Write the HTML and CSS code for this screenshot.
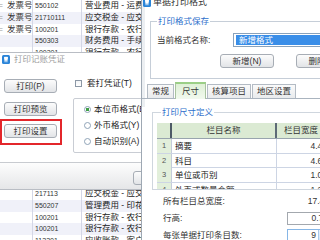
FILE: index.html
```html
<!DOCTYPE html>
<html>
<head>
<meta charset="utf-8">
<link rel="stylesheet" href="styles.css">
</head>
<body>
<div class="screen">
  <div class="sheet">
    <div class="row"><span class="c0"><i>=</i>发票号</span><span class="c1">550102</span><span class="c2">营业费用 - 运费</span></div>
    <div class="row"><span class="c0"><i>=</i>发票号</span><span class="c1">21710111</span><span class="c2">应交税金 - 应交增值税</span></div>
    <div class="row"><span class="c0"><i>=</i>发票号</span><span class="c1">100201</span><span class="c2">银行存款 - 农行</span></div>
    <div class="row"><span class="c0"></span><span class="c1">550303</span><span class="c2">财务费用 - 手续费</span></div>
    <div class="row"><span class="c0"></span><span class="c1">100201</span><span class="c2">银行存款 - 农行</span></div>
    <div class="row"><span class="c0"></span><span class="c1">550102</span><span class="c2">营业费用 - 运费</span></div>
    <div class="row"><span class="c0"></span><span class="c1">100201</span><span class="c2">银行存款 - 农行</span></div>
    <div class="row"><span class="c0"></span><span class="c1">550303</span><span class="c2">财务费用 - 手续费</span></div>
    <div class="row"><span class="c0"></span><span class="c1">217113</span><span class="c2">应交税金 - 应交</span></div>
    <div class="row"><span class="c0"></span><span class="c1">550207</span><span class="c2">管理费用 - 印花税</span></div>
    <div class="row"><span class="c0"></span><span class="c1">100201</span><span class="c2">银行存款 - 农行</span></div>
    <div class="row"><span class="c0"></span><span class="c1">550102</span><span class="c2">营业费用 - 运费</span></div>
    <div class="row"><span class="c0"></span><span class="c1">100201</span><span class="c2">银行存款 - 农行</span></div>
    <div class="row"><span class="c0"></span><span class="c1">550303</span><span class="c2">财务费用 - 手续费</span></div>
    <div class="row"><span class="c0"></span><span class="c1">100201</span><span class="c2">银行存款 - 农行</span></div>
    <div class="row"><span class="c0"></span><span class="c1">550207</span><span class="c2">管理费用 - 印花税</span></div>
    <div class="row"><span class="c0"></span><span class="c1">217113</span><span class="c2">应交税金 - 应交</span></div>
    <div class="row"><span class="c0"></span><span class="c1">550207</span><span class="c2">管理费用 - 印花税</span></div>
    <div class="row"><span class="c0"></span><span class="c1">100201</span><span class="c2">银行存款 - 农行</span></div>
    <div class="row"><span class="c0"></span><span class="c1">100201</span><span class="c2">银行存款 - 农行</span></div>
    <div class="row"><span class="c0"></span><span class="c1">112201</span><span class="c2">应收账款 - 客户</span></div>
  </div>

  <div class="win win-left">
    <div class="wl-title">
      <svg class="logo" viewBox="0 0 8 9" width="8" height="9"><rect x="0" y="0" width="8" height="9" rx="1.5" fill="#2a84d8"/><path d="M2 2.6C2 1.6 3 1.4 4 2.1C5 1.4 6 1.6 6 2.6C6 4 5.5 5 5.3 7C5.1 7.8 4.6 7.6 4.5 6.8L4.2 5.3L3.8 5.3L3.5 6.8C3.4 7.6 2.9 7.8 2.7 7C2.5 5 2 4 2 2.6Z" fill="#fff"/></svg>
      <span>打印记账凭证</span>
    </div>
    <div class="wl-body">
      <div class="btn-col">
        <div class="btn btn-p">打印(P)</div>
        <div class="btn btn-v">打印预览</div>
        <div class="mark">
          <div class="btn">打印设置</div>
        </div>
      </div>
      <div class="opt-col">
        <div class="chk-row"><span class="chk"></span><span>套打凭证(T)</span></div>
        <div class="radio-grp">
          <div class="radio-row"><span class="radio on"></span><span>本位币格式(B)</span></div>
          <div class="radio-row"><span class="radio"></span><span>外币格式(Y)</span></div>
          <div class="radio-row"><span class="radio"></span><span>自动识别(A)</span></div>
        </div>
      </div>
    </div>
    <div class="wl-foot">
      <div class="btn btn-small">取消</div>
    </div>
  </div>

  <div class="win win-right">
    <div class="wr-title">
      <svg class="logo" viewBox="0 0 8 9" width="8" height="9"><rect x="0" y="0" width="8" height="9" rx="1.5" fill="#2a84d8"/><path d="M2 2.6C2 1.6 3 1.4 4 2.1C5 1.4 6 1.6 6 2.6C6 4 5.5 5 5.3 7C5.1 7.8 4.6 7.6 4.5 6.8L4.2 5.3L3.8 5.3L3.5 6.8C3.4 7.6 2.9 7.8 2.7 7C2.5 5 2 4 2 2.6Z" fill="#fff"/></svg>
      <span>单据打印格式</span>
    </div>
    <fieldset class="grp grp-save">
      <legend>打印格式保存</legend>
      <div class="name-row">
        <span class="lbl">当前格式名称:</span>
        <div class="name-input"><span class="sel">新增格式</span></div>
      </div>
      <div class="btn-row">
        <div class="btn btn-wide">新增(N)</div>
        <div class="btn btn-wide">删除(D)</div>
      </div>
    </fieldset>
    <div class="tabs">
      <div class="tab">常规</div>
      <div class="tab on">尺寸</div>
      <div class="tab">核算项目</div>
      <div class="tab">地区设置</div>
    </div>
    <div class="panel">
      <fieldset class="grp grp-size">
        <legend>打印尺寸定义</legend>
        <div class="grid">
          <div class="gh"><span class="n"></span><span class="nm">栏目名称</span><span class="w">栏目宽度</span></div>
          <div class="gr"><span class="n">1</span><span class="nm">摘要</span><span class="w">4.40</span></div>
          <div class="gr"><span class="n">2</span><span class="nm">科目</span><span class="w">4.60</span></div>
          <div class="gr"><span class="n">3</span><span class="nm">单位或币别</span><span class="w">1.00</span></div>
          <div class="gr"><span class="n">4</span><span class="nm">外币或数量金额</span><span class="w">1.20</span></div>
        </div>
      </fieldset>
      <div class="fields">
        <span class="flbl">所有栏目总宽度:</span><span class="fval">17.40</span>
        <span class="flbl">行高:</span><span class="finput">0.70</span>
        <span class="flbl">每张单据打印条目数:</span><span class="finput spin">9<i></i></span>
      </div>
    </div>
  </div>
</div>
</body>
</html>
```

FILE: styles.css
```css
* { box-sizing: border-box; margin: 0; padding: 0; }
html, body { width: 320px; height: 240px; overflow: hidden; background: #fff; }
body {
  font-family: "Liberation Sans", "Noto Sans CJK SC", sans-serif;
  font-size: 8.5px;
  color: #222;
}
.screen { position: relative; width: 320px; height: 240px; overflow: hidden; background: #fff; }

/* background spreadsheet */
.sheet { width: 141px; }
.row {
  display: grid;
  grid-template-columns: 33px 49px 1fr;
  height: 11.75px;
  line-height: 11.75px;
  white-space: nowrap;
  overflow: hidden;
  background: #fff;
}
.row:nth-child(even) { background: #f0f1f9; }
.c0 { border-right: 1px solid #d4d7e6; color: #333; overflow: hidden; }
.c0 i { font-style: normal; color: #9a9a9a; margin-left: -2px; margin-right: 4px; }
.c1 { font-size: 7px; padding-left: 2px; border-right: 1px solid #d4d7e6; color: #333; }
.c2 { padding-left: 3px; overflow: hidden; }

/* windows */
.win { position: absolute; background: #fff; }
.logo { display: block; flex: none; }

.win-left {
  left: -4px;
  top: 52px;
  width: 146px;
  border: 1px solid #b9bdc4;
  border-right: none;
  display: flex;
  flex-direction: column;
  overflow: hidden;
}
.wl-title {
  height: 13px;
  display: flex;
  align-items: center;
  gap: 4px;
  padding-left: 5px;
  color: #a0a0a0;
  line-height: 13px;
}
.wl-body {
  height: 96px;
  display: flex;
  padding-left: 3px;
  gap: 11px;
}
.btn-col { width: 62px; flex: none; display: flex; flex-direction: column; }
.btn {
  height: 14px;
  border: 1px solid #a7adb5;
  border-radius: 3px;
  background: linear-gradient(#fcfcfc, #e2e4e7);
  line-height: 12px;
  text-align: center;
  color: #333;
  white-space: nowrap;
}
.btn-col .btn { width: 53px; }
.btn-p { margin: 13px 0 0 4px; }
.btn-v { margin: 9px 0 0 4px; }
.mark {
  margin-top: 3px;
  width: 62px;
  border: 2px solid #e3262b;
  padding: 3px 3px 5px 2px;
}
.opt-col { flex: none; width: 80px; }
.chk-row {
  margin-top: 12px;
  height: 11px;
  display: flex;
  align-items: center;
  gap: 5px;
  padding-left: 2px;
  line-height: 11px;
}
.chk {
  width: 7px; height: 7px;
  border: 1px solid #8c98a6;
  background: linear-gradient(#f2f4f6, #fff);
}
.radio-grp {
  margin-top: 9px;
  height: 55px;
  border: 1px solid #c9cdd4;
  border-radius: 2px;
  padding: 2px 0 0 10px;
}
.radio-row {
  height: 16px;
  display: flex;
  align-items: center;
  gap: 3px;
  white-space: nowrap;
  line-height: 16px;
}
.radio {
  width: 7px; height: 7px;
  border: 1px solid #8fa3b7;
  border-radius: 50%;
  background: #fff;
  flex: none;
}
.radio.on { background: radial-gradient(circle, #3f9e45 0 1.6px, #fff 2px); }
.wl-foot {
  height: 27px;
  border-top: 1px solid #c8cbd0;
  background: linear-gradient(#fdfdfd, #e5e6e8);
  padding: 8px 0 0 136px;
}
.btn-small { width: 40px; }

/* right window */
.win-right {
  left: 141px;
  top: -6px;
  width: 192px;
  height: 252px;
  border-left: 1px solid #9ea8b3;
  box-shadow: inset 3px 0 0 #eceff2;
  background: #fff;
}
.wr-title {
  height: 16px;
  display: flex;
  align-items: center;
  gap: 2px;
  padding-left: 1px;
  font-size: 9px;
  line-height: 16px;
  color: #333;
}
.grp {
  border: 1px solid #c6ced8;
  min-width: 0;
}
.grp legend {
  padding: 0 1px;
  line-height: 10px;
  font-size: 8.5px;
  color: #2e6fcb;
}
.grp-save {
  margin: 6px 0 0 8px;
  padding: 7px 0 10px 6px;
}
.name-row { height: 14px; display: flex; align-items: center; }
.lbl { width: 77px; line-height: 14px; color: #333; white-space: nowrap; }
.name-input {
  width: 100px;
  height: 14px;
  border: 1px solid #8aa2bb;
  padding: 1px 0 1px 2px;
}
.sel {
  display: block;
  height: 10px;
  background: #3a8ee8;
  color: #fff;
  line-height: 10px;
  padding-left: 3px;
}
.btn-row { margin-top: 7px; display: flex; gap: 22px; padding-left: 63px; }
.btn-wide { width: 54px; flex: none; }

.tabs {
  margin-top: 3px;
  height: 17px;
  display: flex;
  align-items: flex-end;
  gap: 1px;
  padding-left: 5px;
  border-bottom: 1px solid #aab4bf;
}
.tab {
  height: 14px;
  padding: 0 4px;
  border: 1px solid #b3bbc4;
  border-bottom: none;
  background: linear-gradient(#fafafa, #e9ebed);
  line-height: 13px;
  color: #333;
  white-space: nowrap;
}
.tab.on {
  height: 17px;
  margin-bottom: -1px;
  padding: 0 6px;
  background: linear-gradient(#dff0d6, #f1f9ee);
  border-color: #a9c3a0;
  border-top: 2px solid #9bcf86;
  line-height: 14px;
  position: relative;
}

.panel { background: #fff; }
.grp-size {
  margin: 8px 0 0 10px;
  padding: 6px 0 0 4px;
  border-color: #cfd6de;
}
.grp-size legend { margin-left: 4px; }
.grid {
  height: 66px;
  overflow: hidden;
  width: 172px;
}
.gh, .gr {
  display: grid;
  grid-template-columns: 15px 105px 52px;
}
.gh {
  height: 16px;
  background: #dbead3;
  border-bottom: 1px solid #98a4ae;
  line-height: 15px;
  color: #333;
}
.gh .n { border-right: 2px solid #4d5a66; }
.gh .nm { text-align: center; border-right: 2px solid #5d6a76; }
.gh .w { text-align: center; padding-right: 4px; }
.gr {
  height: 14.6px;
  line-height: 14px;
  border-bottom: 1px solid #cdd5e4;
}
.gr .n {
  background: #e2efdb;
  text-align: center;
  color: #555;
  font-size: 7.5px;
  border-right: 1px solid #c4ccda;
}
.gr .nm { padding-left: 3px; border-right: 1px solid #cdd5e4; white-space: nowrap; color: #222; }
.gr .w { text-align: right; padding-right: 2px; color: #333; }

.fields {
  margin-top: 4px;
  display: grid;
  grid-template-columns: 124px 46px;
  grid-template-rows: 14px 14px 14px;
  row-gap: 3px;
  padding-left: 21px;
  align-items: center;
}
.flbl { line-height: 14px; color: #333; white-space: nowrap; }
.fval { text-align: right; padding-right: 4px; line-height: 14px; color: #333; }
.finput {
  height: 13px;
  border: 1px solid #a3a8ae;
  text-align: right;
  padding-right: 4px;
  line-height: 11px;
  color: #333;
}
.finput.spin {
  border-color: #86b6e6;
  padding-right: 16px;
  position: relative;
}
.finput.spin i {
  position: absolute;
  right: 0; top: 0;
  width: 14px; height: 11px;
  background: linear-gradient(#e8f2fc, #cfe3f7);
  border-left: 1px solid #a9c9ea;
}
```
